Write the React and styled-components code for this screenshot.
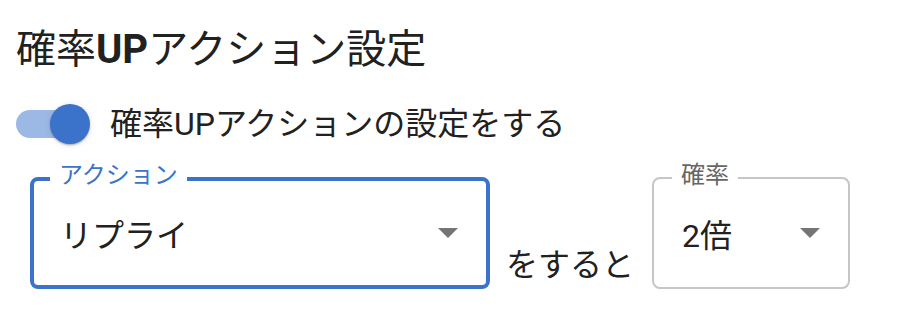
import React from 'react'
import { useState } from 'react'
import styled, { createGlobalStyle } from 'styled-components'

const Global = createGlobalStyle`
    html, body {
        margin: 0;
        padding: 0;
        background: #fff;
    }
    body {
        font-family: Roboto, "Noto Sans CJK JP", "Noto Sans", sans-serif;
        color: #212121;
    }
`

const PRIMARY = '#3a73c9'

const Page = styled.div`
    padding: 16px;
`

const Title = styled.h2`
    margin: 10px 0 0;
    font-size: 40px;
    line-height: 48px;
    font-weight: 400;
    letter-spacing: 0;

    & b {
        font-weight: 700;
    }
`

const ToggleRow = styled.label`
    display: flex;
    align-items: center;
    height: 40px;
    margin-top: 30px;
    cursor: pointer;
`

const Switch = styled.span`
    position: relative;
    flex: none;
    width: 74px;
    height: 40px;
`

const Track = styled.span`
    position: absolute;
    left: 0;
    top: 6px;
    width: 68px;
    height: 28px;
    border-radius: 14px;
    background: ${(p) => (p.$on ? '#9cb9e6' : '#bdbdbd')};
`

const Thumb = styled.span`
    position: absolute;
    top: 0;
    left: ${(p) => (p.$on ? '34px' : '-6px')};
    width: 40px;
    height: 40px;
    border-radius: 50%;
    background: ${(p) => (p.$on ? PRIMARY : '#fafafa')};
    box-shadow: 0 2px 2px -1px rgba(0, 0, 0, 0.2), 0 1px 2px 0 rgba(0, 0, 0, 0.14),
        0 1px 6px 0 rgba(0, 0, 0, 0.12);
`

const ToggleText = styled.span`
    margin-left: 20px;
    font-size: 32px;
    line-height: 40px;
`

const FormRow = styled.div`
    display: flex;
    align-items: flex-end;
    margin-top: 33px;
    padding-left: 14px;
`

const Field = styled.div`
    position: relative;
    flex: none;
    width: ${(p) => p.$width}px;
`

const Box = styled.div`
    box-sizing: border-box;
    height: 112px;
    display: flex;
    align-items: center;
    justify-content: space-between;
    padding: 0 28px 0 ${(p) => (p.$focused ? 26 : 28)}px;
    border: ${(p) => (p.$focused ? `4px solid ${PRIMARY}` : '2px solid #c6c6c6')};
    border-radius: 8px;
    font-size: 32px;
    color: #212121;
`

const FieldLabel = styled.span`
    position: absolute;
    top: -14px;
    left: 20px;
    padding: 0 9px;
    background: #fff;
    font-size: 24px;
    line-height: 24px;
    color: ${(p) => (p.$focused ? PRIMARY : '#666')};
`

const Arrow = styled.svg`
    flex: none;
    width: 20px;
    height: 10px;
    fill: #757575;
`

const Joiner = styled.span`
    margin: 0 18px 0 16px;
    font-size: 32px;
    line-height: 48px;
    white-space: nowrap;
`

const Select = ({ label, value, width, focused }) => (
    <Field $width={width}>
        <Box $focused={focused}>
            <span>{value}</span>
            <Arrow viewBox="0 0 20 10">
                <polygon points="0,0 20,0 10,10" />
            </Arrow>
        </Box>
        <FieldLabel $focused={focused}>{label}</FieldLabel>
    </Field>
)

const App = () => {
    const [on, setOn] = useState(true)
    return (
        <Page>
            <Global />
            <Title>
                確率<b>UP</b>アクション設定
            </Title>
            <ToggleRow onClick={() => setOn(!on)}>
                <Switch>
                    <Track $on={on} />
                    <Thumb $on={on} />
                </Switch>
                <ToggleText>確率UPアクションの設定をする</ToggleText>
            </ToggleRow>
            <FormRow>
                <Select label="アクション" value="リプライ" width={460} focused />
                <Joiner>をすると</Joiner>
                <Select label="確率" value="2倍" width={198} />
            </FormRow>
        </Page>
    )
}

export default App
